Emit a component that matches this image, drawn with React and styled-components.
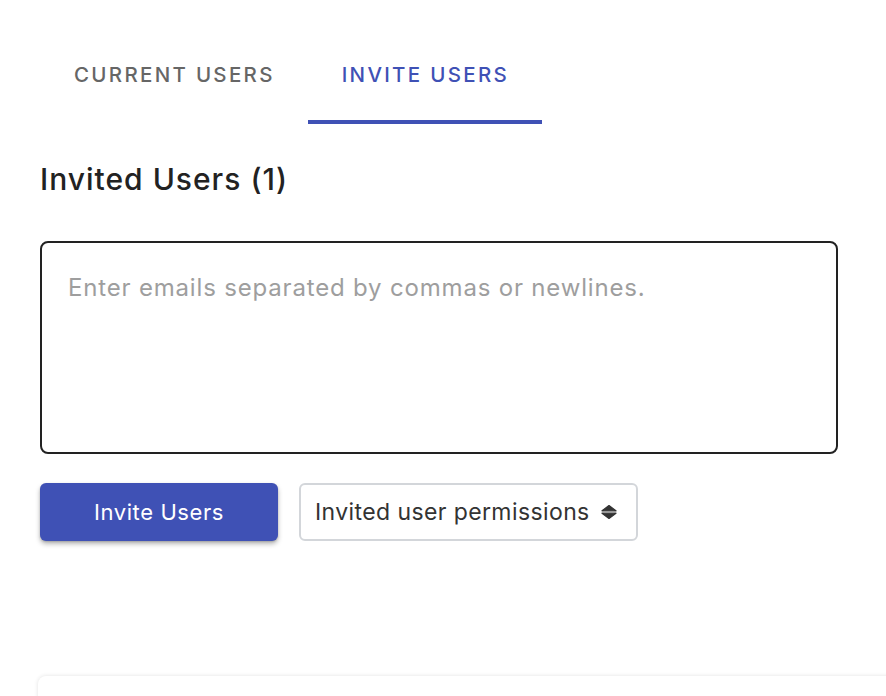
import React, { useState } from "react";
import styled, { createGlobalStyle } from "styled-components";

const GlobalStyle = createGlobalStyle`
  html, body { margin: 0; padding: 0; background: #ffffff; }
  body { font-family: Inter, "Liberation Sans", Arial, sans-serif; overflow: hidden; }
  * { box-sizing: border-box; }
`;

const Page = styled.div`
  padding: 28px 0 0 40px;
  width: 886px;
  height: 696px;
  overflow: hidden;
`;

const TabBar = styled.div`
  display: flex;
`;

const Tab = styled.button`
  height: 96px;
  padding: 0 33px 0 34px;
  border: none;
  border-bottom: 4px solid ${(p) => (p.$active ? "#3f51b5" : "transparent")};
  background: none;
  font-family: Inter, "Liberation Sans", sans-serif;
  font-weight: 500;
  font-size: 20.5px;
  letter-spacing: 2.3px;
  text-transform: uppercase;
  color: ${(p) => (p.$active ? "#3f51b5" : "#666666")};
  cursor: pointer;
  display: flex;
  align-items: center;
`;

const Heading = styled.h2`
  margin: 37px 0 0 0;
  font-family: Inter, "Liberation Sans", Arial, sans-serif;
  font-weight: 500;
  font-size: 30px;
  letter-spacing: 1px;
  color: #222222;
`;

const EmailBox = styled.textarea`
  display: block;
  margin-top: 44px;
  width: 798px;
  height: 213px;
  border: 2px solid #222222;
  border-radius: 8px;
  padding: 30px 26px 29px;
  font-family: Inter, "Liberation Sans", Arial, sans-serif;
  font-size: 24px;
  letter-spacing: 0.82px;
  color: #222;
  resize: none;
  outline: none;
  &::placeholder { color: #9e9e9e; }
`;

const Actions = styled.div`
  display: flex;
  gap: 21px;
  margin-top: 29px;
`;

const PrimaryButton = styled.button`
  width: 238px;
  height: 58px;
  border: none;
  border-radius: 6px;
  background: #3f51b5;
  color: #ffffff;
  font-family: Inter, "Liberation Sans", sans-serif;
  font-size: 22px;
  letter-spacing: 0.6px;
  box-shadow: 0 3px 5px rgba(0, 0, 0, 0.28), 0 1px 2px rgba(0, 0, 0, 0.15);
  cursor: pointer;
`;

const SelectBox = styled.div`
  width: 339px;
  height: 58px;
  border: 2px solid #d3d6da;
  border-radius: 6px;
  display: flex;
  align-items: center;
  justify-content: space-between;
  padding: 0 19px 0 14px;
  font-family: Inter, "Liberation Sans", Arial, sans-serif;
  font-size: 23px;
  letter-spacing: 0.4px;
  color: #333333;
`;

const Card = styled.div`
  margin-top: 135px;
  margin-left: -2px;
  width: 900px;
  height: 60px;
  border-radius: 8px;
  background: #fff;
  box-shadow: 0 0 4px rgba(0, 0, 0, 0.12);
`;

const SortIcon = () => (
  <svg width="16" height="14" viewBox="0 0 16 14" aria-hidden="true">
    <path d="M1 5.8 L8 0.6 L15 5.8 Z" fill="#333" stroke="#333" strokeWidth="1.2" strokeLinejoin="round" />
    <path d="M1 8.2 L15 8.2 L8 13.4 Z" fill="#333" stroke="#333" strokeWidth="1.2" strokeLinejoin="round" />
  </svg>
);

export default function App() {
  const [tab, setTab] = useState("invite");
  return (
    <>
      <GlobalStyle />
      <Page>
        <TabBar>
          <Tab $active={tab === "current"} onClick={() => setTab("current")}>Current Users</Tab>
          <Tab $active={tab === "invite"} onClick={() => setTab("invite")}>Invite Users</Tab>
        </TabBar>
        <Heading>Invited Users (1)</Heading>
        <EmailBox placeholder="Enter emails separated by commas or newlines." />
        <Actions>
          <PrimaryButton>Invite Users</PrimaryButton>
          <SelectBox>
            <span>Invited user permissions</span>
            <SortIcon />
          </SelectBox>
        </Actions>
        <Card />
      </Page>
    </>
  );
}
